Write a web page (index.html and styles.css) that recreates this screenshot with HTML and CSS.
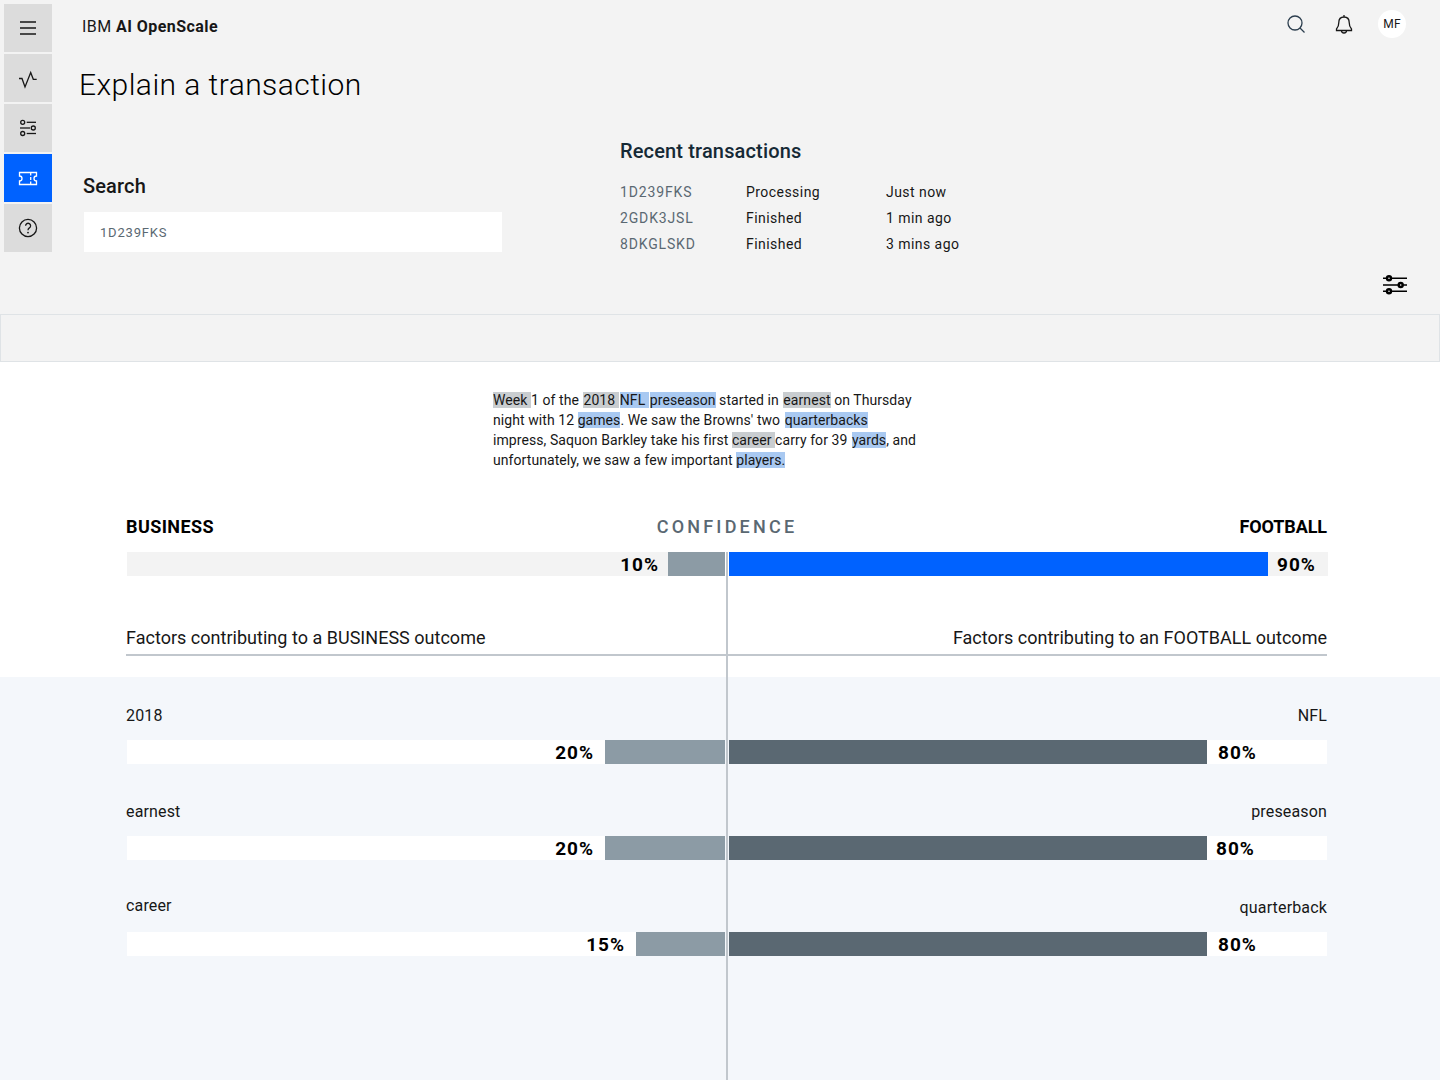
FILE: index.html
```html
<!DOCTYPE html>
<html>
<head>
  <meta name="viewport" content="width=device-width, initial-scale=1.0">
  <title>IBM AI OpenScale - Explain a transaction</title>
  <link rel="stylesheet" href="styles.css">
</head>
<body>
  <div class="page">

    <!-- Top: rail, header, search and recent transactions -->
    <div class="top">
      <nav class="rail">
        <div class="rail-item">
          <svg class="icon" viewBox="0 0 24 24"><path d="M4 6h16M4 12h16M4 18h16"/></svg>
        </div>
        <div class="rail-item">
          <svg class="icon" viewBox="0 0 24 24"><path d="M3 12.5h3L9 21l5.7-14.5 2.6 6.8h3.4"/></svg>
        </div>
        <div class="rail-item">
          <svg class="icon" viewBox="0 0 24 24">
            <circle cx="6.7" cy="6.3" r="2"/><path d="M10.7 6.3H20"/>
            <path d="M4 12h10"/><circle cx="17.3" cy="12" r="2"/>
            <circle cx="6.7" cy="17.5" r="2"/><path d="M10.7 17.5H20"/>
          </svg>
        </div>
        <div class="rail-item selected">
          <svg class="icon" viewBox="0 0 24 24">
            <path d="M3.5 6.5h17V10a2.5 2.5 0 0 0 0 5v3.500h-17V15a2.500 2.500 0 0 0 0-5z"/>
            <path d="M14.700 6.500v3M14.700 11v3M14.700 15.500v3"/>
          </svg>
        </div>
        <div class="rail-item">
          <svg class="icon" viewBox="0 0 24 24">
            <circle cx="12" cy="12" r="8.600"/>
            <path d="M9.600 9.800a2.500 2.500 0 1 1 3.800 2.100c-.9.600-1.400 1.100-1.400 2.300"/>
            <circle class="dot" cx="12" cy="16.600" r=".9"/>
          </svg>
        </div>
      </nav>

      <div class="main">
        <header class="topbar">
          <div class="brand">IBM <b>AI OpenScale</b></div>
          <div class="actions">
            <div class="action">
              <svg class="icon search-icon" viewBox="0 0 24 24"><circle cx="11" cy="11" r="7"/><path d="M16 16l4.500 4.500"/></svg>
            </div>
            <div class="action">
              <svg class="icon" viewBox="0 0 24 24">
                <path d="M12 3v2M12 5c-3.300 0-5.200 2.300-5.200 5.500 0 3.700-.8 5-2.300 6.500v1.500h15V17c-1.500-1.500-2.300-2.800-2.300-6.500C17.200 7.300 15.300 5 12 5z"/>
                <path d="M9.500 18.500a2.500 2.500 0 0 0 5 0"/>
              </svg>
            </div>
            <div class="action">
              <div class="avatar">MF</div>
            </div>
          </div>
        </header>

        <h1 class="page-title">Explain a transaction</h1>

        <div class="panels">
          <section class="search-panel">
            <h2 class="search-label">Search</h2>
            <input class="search-input" type="text" value="1D239FKS">
          </section>
          <section class="recent-panel">
            <h2 class="recent-title">Recent transactions</h2>
            <div class="recent-row"><span class="tx-id">1D239FKS</span><span class="tx-state">Processing</span><span>Just now</span></div>
            <div class="recent-row"><span class="tx-id">2GDK3JSL</span><span class="tx-state">Finished</span><span>1 min ago</span></div>
            <div class="recent-row"><span class="tx-id">8DKGLSKD</span><span class="tx-state">Finished</span><span>3 mins ago</span></div>
          </section>
        </div>

        <div class="filter-row">
          <svg class="filter-icon" viewBox="0 0 28 28">
            <path d="M2 7.300h24M2 14h24M2 20.300h24"/>
            <circle cx="8" cy="7.300" r="2"/><circle cx="19.700" cy="14" r="2"/><circle cx="8" cy="20.300" r="2"/>
          </svg>
        </div>
      </div>
    </div>

    <div class="band"></div>

    <!-- Transaction text and overall confidence -->
    <section class="summary">
      <p class="passage">
        <mark class="gray">Week </mark>1 of the <mark class="gray">2018 </mark><mark class="blue">NFL </mark><mark class="blue">preseason</mark> started in <mark class="gray">earnest</mark> on Thursday<br>
        night with 12 <mark class="blue">games</mark>. We saw the Browns' two <mark class="blue">quarterbacks</mark><br>
        impress, Saquon Barkley take his first <mark class="gray">career </mark>carry for 39 <mark class="blue">yards</mark>, and<br>
        unfortunately, we saw a few important <mark class="blue">players.</mark>
      </p>

      <div class="wrap">
        <div class="outcome-head">
          <strong>BUSINESS</strong>
          <span class="confidence">CONFIDENCE</span>
          <strong class="outcome-right">FOOTBALL</strong>
        </div>

        <div class="bars overall">
          <div class="track track-left gray-track">
            <span class="pct">10%</span>
            <div class="fill fill-light" style="width: 57px"></div>
          </div>
          <div class="track gray-track">
            <div class="fill fill-blue" style="width: 539px"></div>
            <span class="pct">90%</span>
          </div>
        </div>

        <div class="factor-head">
          <span>Factors contributing to a BUSINESS outcome</span>
          <span>Factors contributing to an FOOTBALL outcome</span>
        </div>
      </div>
    </section>

    <!-- Factors per outcome -->
    <section class="factors">
      <div class="wrap">
        <div class="factor">
          <div class="factor-labels"><span>2018</span><span>NFL</span></div>
          <div class="bars">
            <div class="track track-left">
              <span class="pct">20%</span>
              <div class="fill fill-light" style="width: 120px"></div>
            </div>
            <div class="track">
              <div class="fill fill-dark" style="width: 478px"></div>
              <span class="pct">80%</span>
            </div>
          </div>
        </div>

        <div class="factor">
          <div class="factor-labels"><span>earnest</span><span>preseason</span></div>
          <div class="bars">
            <div class="track track-left">
              <span class="pct">20%</span>
              <div class="fill fill-light" style="width: 120px"></div>
            </div>
            <div class="track tight">
              <div class="fill fill-dark" style="width: 478px"></div>
              <span class="pct">80%</span>
            </div>
          </div>
        </div>

        <div class="factor">
          <div class="factor-labels"><span class="raised">career</span><span>quarterback</span></div>
          <div class="bars">
            <div class="track track-left">
              <span class="pct">15%</span>
              <div class="fill fill-light" style="width: 89px"></div>
            </div>
            <div class="track">
              <div class="fill fill-dark" style="width: 478px"></div>
              <span class="pct">80%</span>
            </div>
          </div>
        </div>
      </div>
    </section>

    <div class="center-line"></div>
  </div>
</body>
</html>
```

FILE: styles.css
```css
* {
  box-sizing: border-box;
  margin: 0;
  padding: 0;
}

body {
  font-family: Roboto, "Noto Sans", Arial, sans-serif;
  font-size: 14px;
  letter-spacing: 0.15px;
  color: #171717;
  background-color: #f3f3f3;
}

.page {
  position: relative;
  width: 1440px;
  height: 1080px;
  overflow: hidden;
}

.icon {
  width: 24px;
  height: 24px;
  fill: none;
  stroke: #171717;
  stroke-width: 1.3;
  display: block;
}

/* Top section */
.top {
  display: flex;
  height: 314px;
}

.rail {
  width: 52px;
  padding: 4px 0 0 4px;
  display: flex;
  flex-direction: column;
  gap: 2px;
}

.rail-item {
  width: 48px;
  height: 48px;
  background: #dcdcdc;
  display: flex;
  justify-content: center;
  align-items: center;
}

.rail-item.selected {
  background: #0062ff;
}

.rail-item.selected .icon {
  stroke: white;
}

.dot {
  fill: #171717;
  stroke: none;
}

.main {
  flex: 1;
  padding-left: 30px;
}

.topbar {
  height: 52px;
  display: flex;
  justify-content: space-between;
  padding-right: 24px;
}

.brand {
  font-size: 16px;
  line-height: 54px;
  letter-spacing: 0.45px;
}

.brand b {
  font-weight: 700;
}

.actions {
  display: flex;
}

.action {
  width: 48px;
  height: 48px;
  display: flex;
  justify-content: center;
  align-items: center;
}

.search-icon {
  stroke: #2c3e4e;
}

.avatar {
  width: 28px;
  height: 28px;
  border-radius: 50%;
  background: white;
  font-size: 12px;
  line-height: 29px;
  text-align: center;
}

.page-title {
  font-size: 30px;
  line-height: 40px;
  font-weight: 300;
  letter-spacing: 0.45px;
  color: #000;
  margin: 13px 0 0 -3px;
}

.panels {
  display: grid;
  grid-template-columns: 538px auto;
  margin-top: 34px;
}

.search-panel {
  padding-top: 35px;
}

.search-label {
  font-size: 20px;
  line-height: 24px;
  font-weight: 500;
  margin: 0 0 14px 1px;
}

.search-input {
  display: block;
  width: 418px;
  height: 40px;
  margin-left: 2px;
  padding: 1px 0 0 16px;
  border: none;
  background: white;
  font-family: inherit;
  font-size: 13px;
  letter-spacing: 0.8px;
  color: #5a6872;
}

.recent-title {
  font-size: 20px;
  line-height: 24px;
  font-weight: 500;
  color: #152935;
  margin-bottom: 16px;
}

.recent-row {
  display: flex;
  line-height: 26px;
  letter-spacing: 0.45px;
}

.tx-id {
  width: 126px;
  color: #5a6872;
  letter-spacing: 0.85px;
}

.tx-state {
  width: 140px;
}

.filter-row {
  display: flex;
  justify-content: flex-end;
  padding-right: 31px;
  margin-top: 14px;
}

.filter-icon {
  width: 28px;
  height: 28px;
  stroke: #000;
  stroke-width: 1.6;
  fill: #fff;
}

.filter-icon circle {
  stroke-width: 2.4;
}

.band {
  height: 48px;
  background: #f3f3f3;
  border: 1px solid #dfe3e6;
}

/* Summary */
.summary {
  height: 315px;
  background: white;
  padding-top: 28px;
}

.passage {
  margin-left: 493px;
  line-height: 20px;
  letter-spacing: 0.07px;
  white-space: nowrap;
}

mark {
  color: inherit;
}

mark.gray {
  background: #c9cdd0;
}

mark.blue {
  background: #a9c9f1;
}

mark + mark {
  margin-left: 1px;
}

.wrap {
  width: 1201px;
  margin-left: 126px;
}

.outcome-head {
  display: grid;
  grid-template-columns: 1fr auto 1fr;
  align-items: center;
  margin-top: 45px;
  line-height: 24px;
  font-size: 18px;
  letter-spacing: 0.4px;
}

.outcome-head strong {
  font-weight: 700;
  color: #000;
}

.outcome-head .outcome-right {
  text-align: right;
  letter-spacing: -0.1px;
}

.confidence {
  font-weight: 500;
  letter-spacing: 3.2px;
  color: #5a6872;
  margin-left: 1px;
}

.bars {
  display: grid;
  grid-template-columns: 598px 1fr;
  column-gap: 4px;
  margin-left: 1px;
}

.overall {
  margin: 13px -1px 0 1px;
}

.track {
  height: 24px;
  background: white;
  display: flex;
  align-items: center;
  gap: 11px;
}

.track.tight,
.overall .track {
  gap: 9px;
}

.gray-track {
  background: #f3f3f3;
}

.track-left {
  justify-content: flex-end;
}

.fill {
  height: 24px;
}

.fill-light {
  background: #8c9ba5;
}

.fill-dark {
  background: #5a6872;
}

.fill-blue {
  background: #0062ff;
}

.pct {
  font-size: 19px;
  font-weight: 700;
  letter-spacing: 1px;
  color: #000;
}

.factor-head {
  display: flex;
  justify-content: space-between;
  margin-top: 50px;
  padding-bottom: 4px;
  border-bottom: 2px solid #c1c7cd;
  font-size: 18px;
  line-height: 24px;
  font-weight: 400;
  letter-spacing: 0.02px;
}

/* Factors */
.factors {
  height: 403px;
  background: #f4f7fb;
  padding-top: 27px;
}

.factor {
  margin-bottom: 36px;
}

.factor-labels {
  display: flex;
  justify-content: space-between;
  font-size: 16px;
  line-height: 24px;
  margin-bottom: 12px;
}

.raised {
  margin-top: -2px;
}

.center-line {
  position: absolute;
  left: 726px;
  top: 552px;
  bottom: 0;
  width: 2px;
  background: #c1c7cd;
}
```
